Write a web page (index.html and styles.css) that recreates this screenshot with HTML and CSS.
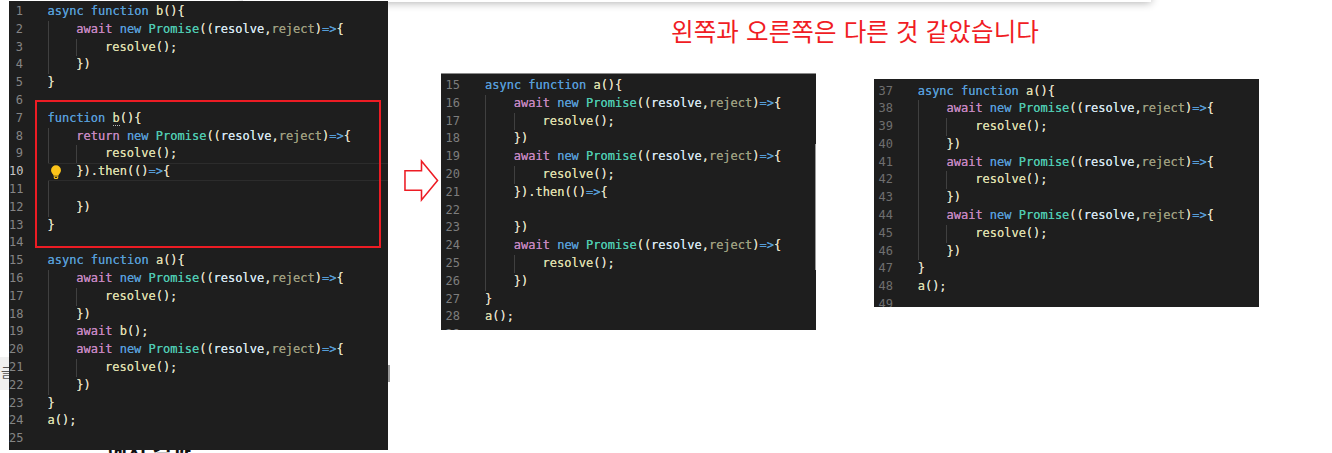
FILE: index.html
```html
<!DOCTYPE html>
<html lang="ko">
<head>
<meta charset="utf-8">
<title>왼쪽과 오른쪽은 다른 것 같았습니다</title>
<link rel="stylesheet" href="styles.css">
</head>
<body>
<main class="canvas">
  <div class="topbar"></div>
  <div class="page-left"><span class="page-glyph">글</span></div>
  <div class="page-right"></div>
  <div class="page-text">에서 결과</div>

  <section class="code code-main">
    <div class="ln"><span class="n">1</span><span class="c"><i class="k">async</i> <i class="k">function</i> <i class="f">b</i><i class="b">(){</i></span></div>
    <div class="ln"><span class="n">2</span><span class="c"><span class="g"></span><i class="m">await</i> <i class="k">new</i> <i class="t">Promise</i><i class="b">((</i><i class="p">resolve</i>,<i class="u">reject</i><i class="b">)</i><i class="k">=&gt;</i><i class="b">{</i></span></div>
    <div class="ln"><span class="n">3</span><span class="c"><span class="g"></span><span class="g"></span><i class="f">resolve</i>();</span></div>
    <div class="ln"><span class="n">4</span><span class="c"><span class="g"></span><i class="b">})</i></span></div>
    <div class="ln"><span class="n">5</span><span class="c"><i class="b">}</i></span></div>
    <div class="ln"><span class="n">6</span><span class="c"></span></div>
    <div class="ln"><span class="n">7</span><span class="c"><i class="k">function</i> <i class="f hint">b</i><i class="b">(){</i></span></div>
    <div class="ln"><span class="n">8</span><span class="c"><span class="g"></span><i class="m">return</i> <i class="k">new</i> <i class="t">Promise</i><i class="b">((</i><i class="p">resolve</i>,<i class="u">reject</i><i class="b">)</i><i class="k">=&gt;</i><i class="b">{</i></span></div>
    <div class="ln"><span class="n">9</span><span class="c"><span class="g"></span><span class="g"></span><i class="f">resolve</i>();</span></div>
    <div class="ln current"><span class="n">10</span><span class="c"><span class="g-none"></span><i class="b">})</i>.<i class="f">then</i><i class="b">(()</i><i class="k">=&gt;</i><i class="b">{</i></span>
      <svg class="bulb" viewBox="0 0 10 13" aria-hidden="true"><path d="M5 .3a4.600 4.600 0 0 0-4.600 4.600c0 1.800 1 2.700 1.700 3.600.4.5.6 1 .6 1.400h4.600c0-.5.2-.9.6-1.400.7-.9 1.700-1.800 1.700-3.600A4.600 4.600 0 0 0 5 .3z" fill="#fcc419"/><path d="M2.900 10.500h4.200v1.600l-.8.8H3.700l-.8-.8z" fill="#fcc419"/><rect x="4" y="11" width="2" height="1" fill="#1e1e1e"/></svg>
    </div>
    <div class="ln"><span class="n">11</span><span class="c"><span class="g"></span></span></div>
    <div class="ln"><span class="n">12</span><span class="c"><span class="g"></span><i class="b">})</i></span></div>
    <div class="ln"><span class="n">13</span><span class="c"><i class="b">}</i></span></div>
    <div class="ln"><span class="n">14</span><span class="c"></span></div>
    <div class="ln"><span class="n">15</span><span class="c"><i class="k">async</i> <i class="k">function</i> <i class="f">a</i><i class="b">(){</i></span></div>
    <div class="ln"><span class="n">16</span><span class="c"><span class="g"></span><i class="m">await</i> <i class="k">new</i> <i class="t">Promise</i><i class="b">((</i><i class="p">resolve</i>,<i class="u">reject</i><i class="b">)</i><i class="k">=&gt;</i><i class="b">{</i></span></div>
    <div class="ln"><span class="n">17</span><span class="c"><span class="g"></span><span class="g"></span><i class="f">resolve</i>();</span></div>
    <div class="ln"><span class="n">18</span><span class="c"><span class="g"></span><i class="b">})</i></span></div>
    <div class="ln"><span class="n">19</span><span class="c"><span class="g"></span><i class="m">await</i> <i class="f">b</i>();</span></div>
    <div class="ln"><span class="n">20</span><span class="c"><span class="g"></span><i class="m">await</i> <i class="k">new</i> <i class="t">Promise</i><i class="b">((</i><i class="p">resolve</i>,<i class="u">reject</i><i class="b">)</i><i class="k">=&gt;</i><i class="b">{</i></span></div>
    <div class="ln"><span class="n">21</span><span class="c"><span class="g"></span><span class="g"></span><i class="f">resolve</i>();</span></div>
    <div class="ln"><span class="n">22</span><span class="c"><span class="g"></span><i class="b">})</i></span></div>
    <div class="ln"><span class="n">23</span><span class="c"><i class="b">}</i></span></div>
    <div class="ln"><span class="n">24</span><span class="c"><i class="f">a</i>();</span></div>
    <div class="ln"><span class="n">25</span><span class="c"></span></div>
  </section>

  <div class="highlight"></div>

  <svg class="arrow" viewBox="0 0 36 44" aria-hidden="true"><path d="M1 12h17V2l16.500 20L18 42V32H1z" fill="#fff" stroke="#ed1c24" stroke-width="1.600"/></svg>

  <section class="code code-mid">
    <div class="ln"><span class="n">15</span><span class="c"><i class="k">async</i> <i class="k">function</i> <i class="f">a</i><i class="b">(){</i></span></div>
    <div class="ln"><span class="n">16</span><span class="c"><span class="g"></span><i class="m">await</i> <i class="k">new</i> <i class="t">Promise</i><i class="b">((</i><i class="p">resolve</i>,<i class="u">reject</i><i class="b">)</i><i class="k">=&gt;</i><i class="b">{</i></span></div>
    <div class="ln"><span class="n">17</span><span class="c"><span class="g"></span><span class="g"></span><i class="f">resolve</i>();</span></div>
    <div class="ln"><span class="n">18</span><span class="c"><span class="g"></span><i class="b">})</i></span></div>
    <div class="ln"><span class="n">19</span><span class="c"><span class="g"></span><i class="m">await</i> <i class="k">new</i> <i class="t">Promise</i><i class="b">((</i><i class="p">resolve</i>,<i class="u">reject</i><i class="b">)</i><i class="k">=&gt;</i><i class="b">{</i></span></div>
    <div class="ln"><span class="n">20</span><span class="c"><span class="g"></span><span class="g"></span><i class="f">resolve</i>();</span></div>
    <div class="ln"><span class="n">21</span><span class="c"><span class="g"></span><i class="b">})</i>.<i class="f">then</i><i class="b">(()</i><i class="k">=&gt;</i><i class="b">{</i></span></div>
    <div class="ln"><span class="n">22</span><span class="c"><span class="g"></span></span></div>
    <div class="ln"><span class="n">23</span><span class="c"><span class="g"></span><i class="b">})</i></span></div>
    <div class="ln"><span class="n">24</span><span class="c"><span class="g"></span><i class="m">await</i> <i class="k">new</i> <i class="t">Promise</i><i class="b">((</i><i class="p">resolve</i>,<i class="u">reject</i><i class="b">)</i><i class="k">=&gt;</i><i class="b">{</i></span></div>
    <div class="ln"><span class="n">25</span><span class="c"><span class="g"></span><span class="g"></span><i class="f">resolve</i>();</span></div>
    <div class="ln"><span class="n">26</span><span class="c"><span class="g"></span><i class="b">})</i></span></div>
    <div class="ln"><span class="n">27</span><span class="c"><i class="b">}</i></span></div>
    <div class="ln"><span class="n">28</span><span class="c"><i class="f">a</i>();</span></div>
    <div class="ln"><span class="n">29</span><span class="c"></span></div>
    <div class="mid-edge"></div>
  </section>

  <h1 class="note">왼쪽과 오른쪽은 다른 것 같았습니다</h1>

  <section class="code code-right">
    <div class="ln"><span class="n">37</span><span class="c"><i class="k">async</i> <i class="k">function</i> <i class="f">a</i><i class="b">(){</i></span></div>
    <div class="ln"><span class="n">38</span><span class="c"><span class="g"></span><i class="m">await</i> <i class="k">new</i> <i class="t">Promise</i><i class="b">((</i><i class="p">resolve</i>,<i class="u">reject</i><i class="b">)</i><i class="k">=&gt;</i><i class="b">{</i></span></div>
    <div class="ln"><span class="n">39</span><span class="c"><span class="g"></span><span class="g"></span><i class="f">resolve</i>();</span></div>
    <div class="ln"><span class="n">40</span><span class="c"><span class="g"></span><i class="b">})</i></span></div>
    <div class="ln"><span class="n">41</span><span class="c"><span class="g"></span><i class="m">await</i> <i class="k">new</i> <i class="t">Promise</i><i class="b">((</i><i class="p">resolve</i>,<i class="u">reject</i><i class="b">)</i><i class="k">=&gt;</i><i class="b">{</i></span></div>
    <div class="ln"><span class="n">42</span><span class="c"><span class="g"></span><span class="g"></span><i class="f">resolve</i>();</span></div>
    <div class="ln"><span class="n">43</span><span class="c"><span class="g"></span><i class="b">})</i></span></div>
    <div class="ln"><span class="n">44</span><span class="c"><span class="g"></span><i class="m">await</i> <i class="k">new</i> <i class="t">Promise</i><i class="b">((</i><i class="p">resolve</i>,<i class="u">reject</i><i class="b">)</i><i class="k">=&gt;</i><i class="b">{</i></span></div>
    <div class="ln"><span class="n">45</span><span class="c"><span class="g"></span><span class="g"></span><i class="f">resolve</i>();</span></div>
    <div class="ln"><span class="n">46</span><span class="c"><span class="g"></span><i class="b">})</i></span></div>
    <div class="ln"><span class="n">47</span><span class="c"><i class="b">}</i></span></div>
    <div class="ln"><span class="n">48</span><span class="c"><i class="f">a</i>();</span></div>
    <div class="ln"><span class="n">49</span><span class="c"></span></div>
  </section>
</main>
</body>
</html>
```

FILE: styles.css
```css
* { box-sizing: border-box; }

html, body { margin: 0; background: #fff; }

.canvas {
  position: relative;
  width: 1332px;
  height: 453px;
  overflow: hidden;
}

/* Pasted screenshots on a free canvas */
.code {
  position: absolute;
  overflow: hidden;
  background: #1e1e1e;
  color: #dcdcc8;
  font-family: "DejaVu Sans Mono", monospace;
  font-size: 12px;
  line-height: 17.8px;
  text-shadow: 0 0 .6px currentColor;
}

.code i { font-style: normal; }

.code-main { left: 9px; top: 1px; width: 379px; height: 449px; padding-top: 2px; }
.code-mid { left: 441px; top: 73px; width: 375px; height: 257px; padding-top: 3px; border-top: 1px solid #8a8a8a; }
.code-right { left: 874px; top: 79px; width: 385px; height: 228px; padding-top: 3.5px; }

.ln {
  position: relative;
  display: flex;
  height: 17.8px;
  white-space: pre;
}

.n {
  flex: none;
  width: 14px;
  margin-right: 24.5px;
  text-align: right;
  color: #858585;
  text-shadow: none;
}

.code-mid .n, .code-right .n { width: 19px; margin-right: 25px; }
.code-right .n { color: #6f6f6f; margin-right: 24.7px; }
.code-mid .n { color: #7d7d7d; }

.c { flex: 1; min-width: 0; }

.g, .g-none {
  display: inline-block;
  width: 28.8px;
  height: 17.8px;
  vertical-align: top;
}
.g { border-left: 1px solid #404040; }

.current .c { box-shadow: inset 0 1px 0 #2c2c2c, inset 0 -1px 0 #2c2c2c; }
.current .n { color: #c6c6c6; }

.k { color: #569cd6; }
.m { color: #c586c0; }
.t { color: #4ec9b0; }
.f { color: #dcdcaa; }
.p { color: #d4e4ee; }
.u { color: #9d9d7e; }
.b { color: #e0dcc0; }

.hint { border-bottom: 1px dotted #b8b8b8; }

.bulb {
  position: absolute;
  left: 41px;
  top: 2px;
  width: 12px;
  height: 14px;
}

.highlight {
  position: absolute;
  left: 35px;
  top: 100px;
  width: 346px;
  height: 148px;
  border: 2px solid #ed1c24;
}

.arrow {
  position: absolute;
  left: 404px;
  top: 159px;
  width: 35px;
  height: 43px;
}

.note {
  position: absolute;
  left: 671px;
  top: 14px;
  margin: 0;
  font-family: "Noto Sans CJK KR", "Noto Sans", sans-serif;
  font-size: 24.5px;
  font-weight: 400;
  letter-spacing: .13px;
  line-height: 34px;
  color: #f01c24;
  white-space: nowrap;
}

/* Remnants of the page behind the screenshots */
.topbar {
  position: absolute;
  left: 243px;
  top: -10px;
  width: 908px;
  height: 12px;
  background: #fff;
  box-shadow: 0 1px 8px rgba(0, 0, 0, .3);
}

.page-left {
  position: absolute;
  left: 0;
  top: 357px;
  width: 9px;
  height: 33px;
  overflow: hidden;
  background: #f0f0f0;
}

.page-glyph {
  display: block;
  margin: 6px 0 0 1px;
  width: 14px;
  font-family: "Noto Sans CJK KR", sans-serif;
  font-size: 13px;
  line-height: 18px;
  color: #555;
}

.page-right {
  position: absolute;
  left: 388px;
  top: 365px;
  width: 2px;
  height: 17px;
  background: #9a9a9a;
}

.page-text {
  position: absolute;
  left: 108px;
  top: 437px;
  font-family: "Noto Sans CJK KR", sans-serif;
  font-size: 21px;
  font-weight: 700;
  line-height: 26px;
  color: #111;
  white-space: nowrap;
}

.mid-edge {
  position: absolute;
  right: 0;
  top: 70px;
  width: 1px;
  height: 126px;
  background: #9a9a9a;
}
```
